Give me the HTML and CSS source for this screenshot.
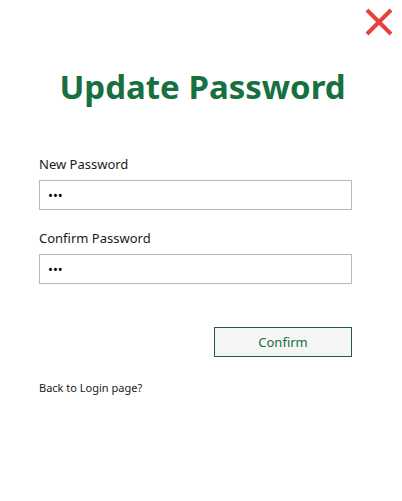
FILE: index.html
```html
<!DOCTYPE html>
<html>
<head>
<meta charset="utf-8">
<link rel="stylesheet" href="styles.css">
</head>
<body>
<div class="page">
  <button class="close" aria-label="Close">
    <svg width="30" height="30" viewBox="0 0 30 30"><path d="M3 3 L27 27 M27 3 L3 27" stroke="#e8403a" stroke-width="4" stroke-linecap="butt"/></svg>
  </button>
  <h1 class="title">Update Password</h1>
  <form class="form">
    <label class="label">New Password</label>
    <input class="field" type="password" value="abc">
    <label class="label second">Confirm Password</label>
    <input class="field" type="password" value="abc">
    <div class="actions">
      <button type="button" class="confirm">Confirm</button>
    </div>
    <a class="back">Back to Login page?</a>
  </form>
</div>
</body>
</html>
```
FILE: styles.css
```css
html, body {
  margin: 0;
  padding: 0;
  background: #ffffff;
}
body {
  font-family: "Noto Sans", "Open Sans", sans-serif;
  color: #1a1a1a;
}
.page {
  position: relative;
  width: 402px;
  height: 501px;
}
.close {
  position: absolute;
  top: 7px;
  right: 8px;
  width: 30px;
  height: 30px;
  padding: 0;
  border: none;
  background: transparent;
  display: flex;
}
.title {
  margin: 0;
  padding-top: 64px;
  padding-left: 3px;
  text-align: center;
  font-size: 33px;
  line-height: 46px;
  font-weight: 700;
  color: #18703f;
}
.form {
  display: flex;
  flex-direction: column;
  width: 313px;
  margin-left: 39px;
  padding-top: 45px;
}
.label {
  font-size: 13px;
  line-height: 18px;
  color: #1a1a1a;
  margin-bottom: 7px;
}
.label.second {
  margin-top: 19px;
}
.field {
  width: 313px;
  height: 30px;
  box-sizing: border-box;
  border: 1px solid #b9b9b9;
  padding: 0 8px;
  font-size: 13px;
  font-family: inherit;
  margin: 0;
  outline: none;
}
.actions {
  display: flex;
  justify-content: flex-end;
  margin-top: 43px;
}
.confirm {
  width: 138px;
  height: 30px;
  border: 1px solid #1f5c3a;
  background: #f5f5f5;
  color: #18703f;
  font-family: inherit;
  font-size: 13px;
  padding: 0;
}
.back {
  margin-top: 23px;
  font-size: 11px;
  line-height: 16px;
  color: #1a1a1a;
}
```
